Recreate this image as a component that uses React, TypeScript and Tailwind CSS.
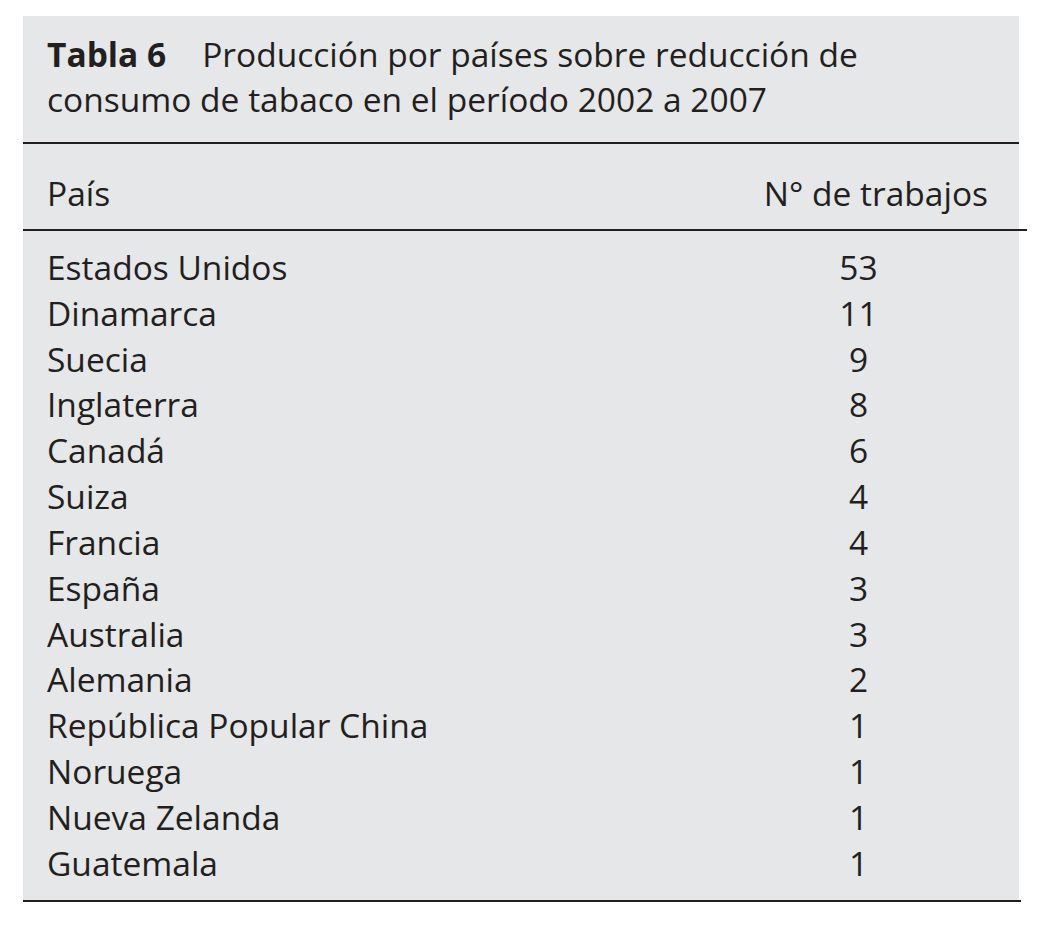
import React from "react";

const rows: [string, number][] = [
  ["Estados Unidos", 53],
  ["Dinamarca", 11],
  ["Suecia", 9],
  ["Inglaterra", 8],
  ["Canadá", 6],
  ["Suiza", 4],
  ["Francia", 4],
  ["España", 3],
  ["Australia", 3],
  ["Alemania", 2],
  ["República Popular China", 1],
  ["Noruega", 1],
  ["Nueva Zelanda", 1],
  ["Guatemala", 1],
];

export default function App() {
  return (
    <div className="w-full h-[925px] bg-white pt-[16px] pl-[23px] text-[#231f20] font-['Open_Sans',sans-serif] text-[33.5px]">
      <div className="w-[996px] bg-[#e6e7e8]">
        <div className="pt-[15.5px] pb-[20.5px] pl-[24px] leading-[45px]">
          <span className="font-bold mr-[36px]">Tabla 6</span>
          Producción por países sobre reducción de
          <br />
          consumo de tabaco en el período 2002 a 2007
        </div>
        <div className="h-[2px] w-[996px] bg-[#231f20]" />
        <div className="flex justify-between pt-[27px] pb-[12px] pl-[24px] pr-[31px] leading-[45.85px]">
          <span>País</span>
          <span>N° de trabajos</span>
        </div>
        <div className="h-[2px] w-[1004px] bg-[#231f20]" />
        <div className="pt-[14px] pb-[13px] pl-[24px] leading-[45.85px]">
          {rows.map(([name, n]) => (
            <div key={name} className="flex">
              <span className="flex-1">{name}</span>
              <span className="w-[100px] text-center mr-[110.5px]">{n}</span>
            </div>
          ))}
        </div>
      </div>
      <div className="h-[2px] w-[998px] bg-[#231f20]" />
    </div>
  );
}
